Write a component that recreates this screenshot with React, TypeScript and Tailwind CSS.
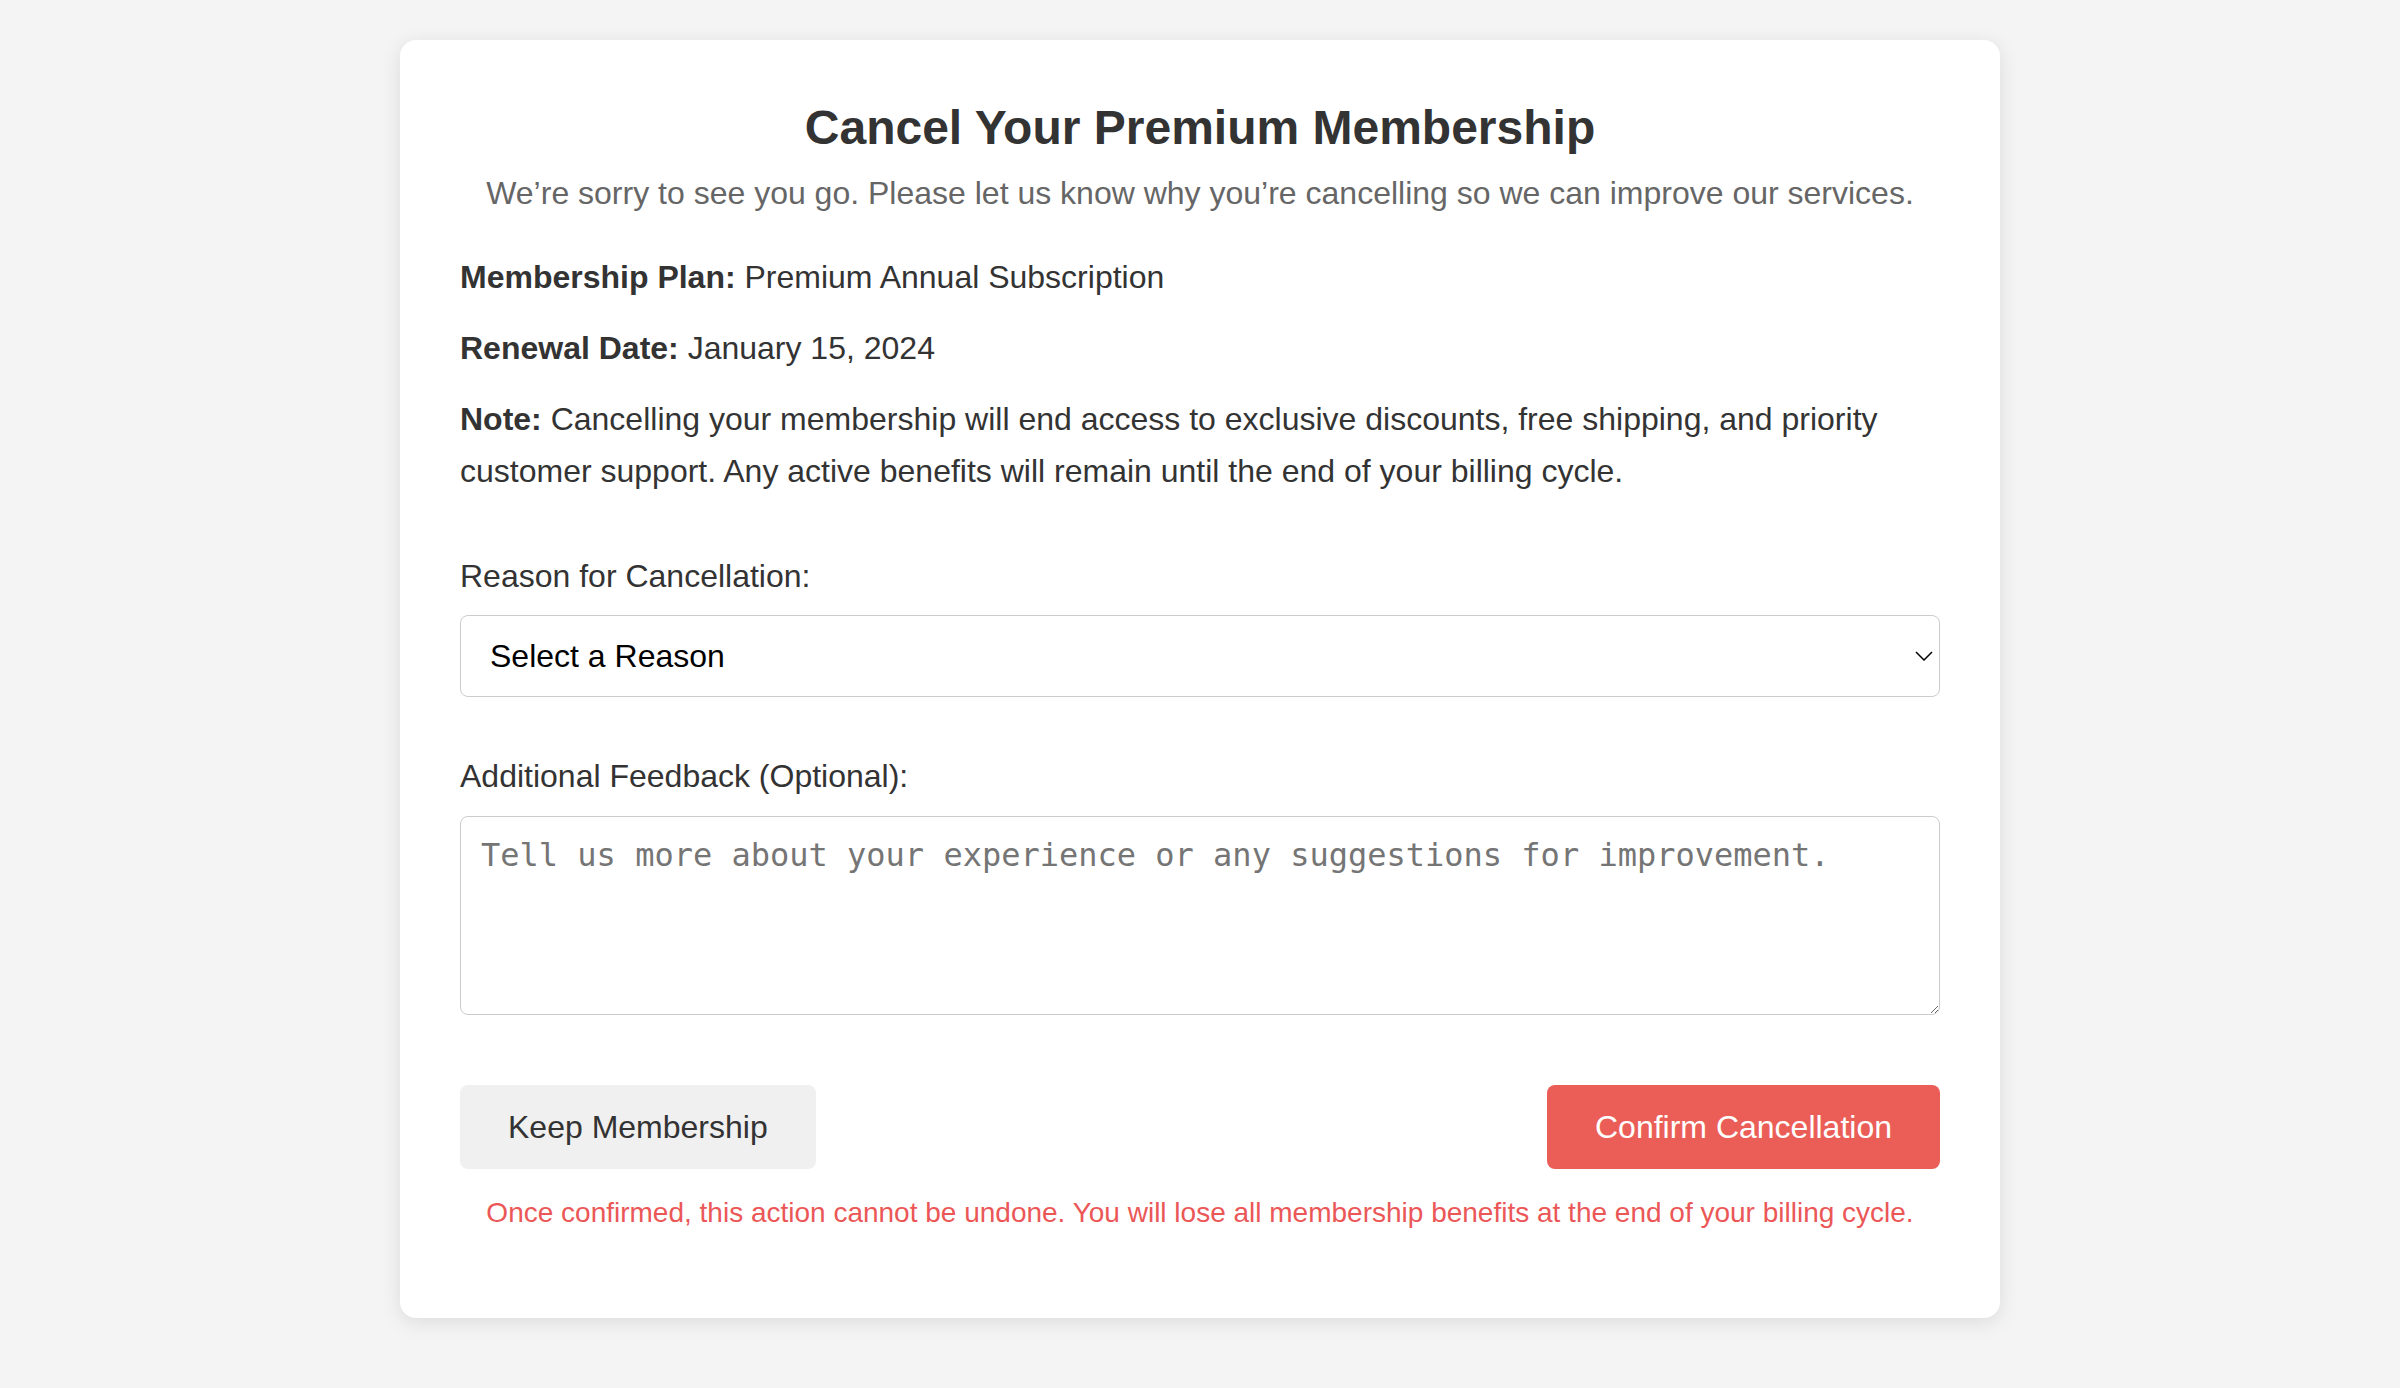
const reasons = [
  'Too expensive',
  'Not using it enough',
  'Found a better alternative',
  'Missing features I need',
  'Other',
];

export default function App() {
  return (
    <div className="min-h-screen bg-[#f4f4f4] pt-10 pb-10 font-['Liberation_Sans',Arial,sans-serif] text-[#333]">
      {/* Card */}
      <div className="mx-auto w-[1600px] rounded-2xl bg-white px-[60px] pt-[60px] pb-[82px] shadow-[0_4px_20px_rgba(0,0,0,0.1)]">
        <h1 className="text-center text-[48px] leading-[55px] font-bold">Cancel Your Premium Membership</h1>
        <p className="mt-[13px] text-center text-[32px] leading-[51px] text-[#666]">
          We’re sorry to see you go. Please let us know why you’re cancelling so we can improve our services.
        </p>

        {/* Membership details */}
        <div className="mt-[33px] flex flex-col gap-[20px] text-[32px] leading-[51.2px]">
          <p>
            <strong className="font-bold">Membership Plan:</strong> Premium Annual Subscription
          </p>
          <p>
            <strong className="font-bold">Renewal Date:</strong> January 15, 2024
          </p>
          <p>
            <strong className="font-bold">Note:</strong> Cancelling your membership will end access to exclusive discounts,
            free shipping, and priority customer support. Any active benefits will remain until the end of your billing
            cycle.
          </p>
        </div>

        {/* Form */}
        <form className="mt-[54px]" onSubmit={(e) => e.preventDefault()}>
          <label htmlFor="reason" className="block text-[32px] leading-[51.2px]">
            Reason for Cancellation:
          </label>
          <div className="relative mt-[13px]">
            <select
              id="reason"
              defaultValue=""
              className="block h-[82px] w-full appearance-none rounded-lg border border-[#ccc] bg-white pl-[29px] pr-14 text-[32px] text-black outline-none"
            >
              <option value="" disabled>
                Select a Reason
              </option>
              {reasons.map((r) => (
                <option key={r} value={r}>
                  {r}
                </option>
              ))}
            </select>
            <svg
              className="pointer-events-none absolute right-[7px] top-1/2 h-[10px] w-[18px] -translate-y-1/2"
              viewBox="0 0 18 10"
              fill="none"
              stroke="#000"
              strokeWidth="1.5"
              aria-hidden="true"
            >
              <polyline points="1,1 9,9 17,1" />
            </svg>
          </div>

          <label htmlFor="feedback" className="mt-[54px] block text-[32px] leading-[51.2px]">
            Additional Feedback (Optional):
          </label>
          <textarea
            id="feedback"
            rows={4}
            placeholder="Tell us more about your experience or any suggestions for improvement."
            className="mt-[14px] block h-[199px] w-full rounded-lg border border-[#ccc] bg-white p-5 font-['DejaVu_Sans_Mono',monospace] text-[32px] leading-[37px] outline-none placeholder:text-[#757575]"
          />

          {/* Actions */}
          <div className="mt-[70px] flex items-center justify-between">
            <button type="button" className="h-[84px] rounded-lg bg-[#f0f0f0] px-12 text-[32px] text-[#333]">
              Keep Membership
            </button>
            <button type="submit" className="h-[84px] rounded-lg bg-[#eb5e58] px-12 text-[32px] text-white">
              Confirm Cancellation
            </button>
          </div>
          <p className="mt-[22px] text-center text-[28px] leading-[44.8px] text-[#eb5757]">
            Once confirmed, this action cannot be undone. You will lose all membership benefits at the end of your billing
            cycle.
          </p>
        </form>
      </div>
    </div>
  );
}
